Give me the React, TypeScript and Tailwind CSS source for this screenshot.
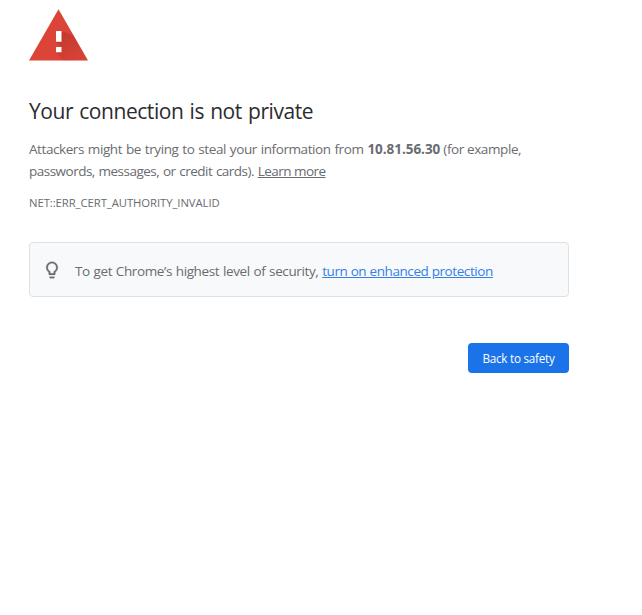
export default function App() {
  return (
    <main className="h-[615px] w-[642px] overflow-hidden bg-white pl-[29px] pt-[9px] font-['Open_Sans','Noto_Sans',sans-serif] text-[#696c70]">
      <div className="w-[540px]">
        <svg className="block" width="60" height="52" viewBox="0 0 60 52">
          <defs>
            <linearGradient id="shade" x1="27" y1="22" x2="52" y2="50" gradientUnits="userSpaceOnUse">
              <stop stopColor="#9f2a20" stopOpacity=".45" />
              <stop offset="1" stopColor="#9f2a20" stopOpacity=".05" />
            </linearGradient>
          </defs>
          <path d="M0 51.500 29.500 0.300 59 51.500z" fill="#db4437" />
          <path d="M32.500 22 44.500 26.500 59 51.500H35l-8-8 5.500-5.500-5.500-5z" fill="url(#shade)" />
          <path d="M27 22h5.500v10.700H27zM27 38h5.500v5.200H27z" fill="#fff" />
        </svg>
        <h1 className="mt-[36px] h-[28px] whitespace-nowrap text-[21px] leading-[28px] tracking-[-0.45px] text-[#2b2c30] [word-spacing:1.2px]">
          <span>Your connection is not private</span>
        </h1>
        <p className="mt-[14px] whitespace-nowrap text-[13.5px] leading-[21.6px]">
          <span className="tracking-[-0.42px] [word-spacing:0.8px]">Attackers might be trying to steal your information from </span>
          <strong className="tracking-[-0.04px]">10.81.56.30</strong>
          <span className="tracking-[-0.4px]"> (for example,</span>
          <br />
          <span className="tracking-[-0.51px] [word-spacing:0.7px]">passwords, messages, or credit cards). </span>
          <a className="tracking-[-0.53px] underline" href="#">Learn more</a>
        </p>
        <div className="mt-[11px] whitespace-nowrap text-[11.3px] leading-[20px] tracking-[-0.07px]"><span>NET::ERR_CERT_AUTHORITY_INVALID</span></div>
        <div className="mt-[29px] flex h-[55px] items-center rounded-[4px] border border-[#dfe1e5] bg-[#f8f9fa] pl-[11.5px]">
          <svg width="20" height="20" viewBox="0 0 24 24" fill="#6b6e72" stroke="#6b6e72" strokeWidth="0.3"><path d="M9 21c0 .5.4 1 1 1h4c.6 0 1-.5 1-1v-1H9v1zm3-19C8.1 2 5 5.1 5 9c0 2.400 1.200 4.500 3 5.700V17c0 .5.4 1 1 1h6c.6 0 1-.5 1-1v-2.300c1.800-1.300 3-3.400 3-5.700 0-3.900-3.100-7-7-7zm2.900 11.100-.9.600V16h-4v-2.300l-.9-.6C7.800 12.200 7 10.600 7 9c0-2.800 2.200-5 5-5s5 2.200 5 5c0 1.600-.8 3.200-2.100 4.100z" /></svg>
          <p className="ml-[13.5px] mt-[2px] whitespace-nowrap text-[13.5px]">
            <span className="tracking-[-0.38px] [word-spacing:0.6px]">To get Chrome’s highest level of security, </span>
            <a className="tracking-[-0.42px] text-[#347fea] underline [word-spacing:0.2px]" href="#">turn on enhanced protection</a>
          </p>
        </div>
        <div className="mt-[46px] flex justify-end">
          <button className="h-[30px] w-[101px] whitespace-nowrap rounded-[4px] bg-[#1a73e8] pt-[2px] text-[11.7px] tracking-[-0.25px] text-white">Back to safety</button>
        </div>
      </div>
    </main>
  );
}
